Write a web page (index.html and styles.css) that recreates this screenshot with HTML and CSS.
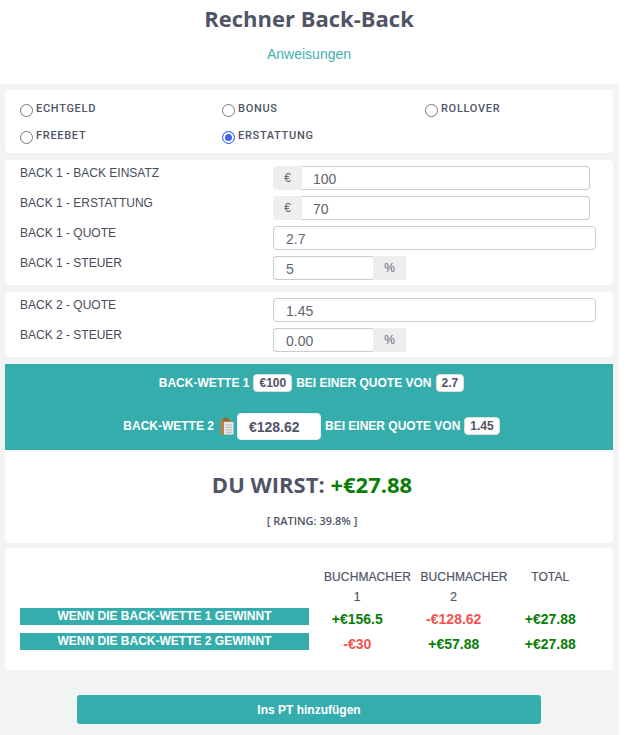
FILE: index.html
```html
<!DOCTYPE html>
<html lang="de">
<head>
<meta charset="utf-8">
<title>Rechner Back-Back</title>
<link rel="stylesheet" href="styles.css">
</head>
<body>
<div class="page">
  <header class="head">
    <h1 class="title">Rechner Back-Back</h1>
    <a class="link" href="#">Anweisungen</a>
  </header>
  <main class="main">
    <section class="card modes">
      <label class="mode"><span class="radio"></span><span class="mode-text">ECHTGELD</span></label>
      <label class="mode"><span class="radio"></span><span class="mode-text">BONUS</span></label>
      <label class="mode"><span class="radio"></span><span class="mode-text">ROLLOVER</span></label>
      <label class="mode"><span class="radio"></span><span class="mode-text">FREEBET</span></label>
      <label class="mode"><span class="radio checked"></span><span class="mode-text">ERSTATTUNG</span></label>
    </section>

    <section class="card fields">
      <div class="label">BACK 1 - BACK EINSATZ</div>
      <div class="group money"><span class="addon">€</span><span class="input joined-left indent">100</span></div>
      <div class="label">BACK 1 - ERSTATTUNG</div>
      <div class="group money"><span class="addon">€</span><span class="input joined-left indent">70</span></div>
      <div class="label">BACK 1 - QUOTE</div>
      <div class="group"><span class="input">2.7</span></div>
      <div class="label">BACK 1 - STEUER</div>
      <div class="group pct"><span class="input joined-right">5</span><span class="addon addon-pct">%</span></div>
    </section>

    <section class="card fields">
      <div class="label">BACK 2 - QUOTE</div>
      <div class="group"><span class="input">1.45</span></div>
      <div class="label">BACK 2 - STEUER</div>
      <div class="group pct"><span class="input joined-right">0.00</span><span class="addon addon-pct">%</span></div>
    </section>

    <section class="result">
      <div class="bets">
        <div class="bet bet-one">BACK-WETTE 1 <span class="chip">€100</span> BEI EINER QUOTE VON <span class="chip">2.7</span></div>
        <div class="bet bet-two">BACK-WETTE 2
          <svg class="clip" width="14" height="17" viewBox="0 0 14 17" aria-hidden="true">
            <rect x="0.5" y="1.5" width="11" height="15" rx="1" fill="#b5824a"/>
            <rect x="3" y="0" width="6" height="3" rx="1" fill="#8f6a3c"/>
            <rect x="4" y="4" width="9.5" height="12.5" fill="#e6e8e8"/>
            <path d="M5.5 7h6.5M5.5 9.5h6.5M5.5 12h6.5M5.5 14.3h6.5" stroke="#b4b9ba" stroke-width="1"/>
          </svg>
          <span class="chip chip-big">€128.62</span> BEI EINER QUOTE VON <span class="chip">1.45</span></div>
      </div>
      <div class="profit">
        <h2 class="profit-line">DU WIRST: <span class="pos">+€27.88</span></h2>
        <p class="rating">[ RATING: 39.8% ]</p>
      </div>
    </section>

    <section class="card table">
      <div class="th first">BUCHMACHER 1</div>
      <div class="th">BUCHMACHER 2</div>
      <div class="th">TOTAL</div>

      <div class="rowlabel">WENN DIE BACK-WETTE 1 GEWINNT</div>
      <div class="val pos">+€156.5</div>
      <div class="val neg">-€128.62</div>
      <div class="val pos">+€27.88</div>

      <div class="rowlabel">WENN DIE BACK-WETTE 2 GEWINNT</div>
      <div class="val neg">-€30</div>
      <div class="val pos">+€57.88</div>
      <div class="val pos">+€27.88</div>
    </section>

    <div class="actions"><button class="btn" type="button">Ins PT hinzufügen</button></div>
  </main>
</div>
</body>
</html>
```

FILE: styles.css
```css
* { box-sizing: border-box; }
html, body { margin: 0; padding: 0; background: #fff; overflow: hidden; height: 735px; }
body { font-family: "Liberation Sans", Arial, sans-serif; color: #4f5467; }
.page { width: 619px; }

.head { height: 84px; text-align: center; padding-top: 3px; padding-right: 1px; }
.title { margin: 0; font-family: "Open Sans", sans-serif; font-weight: 700; font-size: 22px; line-height: 30px; color: #4f5467; }
.link { display: block; margin-top: 12px; font-size: 14px; line-height: 18px; color: #3fb0ae; text-decoration: none; }

.main { background: #f2f4f4; padding: 6px 6px 11px 5px; height: 651px; }
.card { background: #fff; border-radius: 4px; box-shadow: 0 0 1px rgba(0,0,0,.06); }

.modes { height: 63px; padding: 11px 15px 0; display: grid; grid-template-columns: 202px 203px 1fr; grid-auto-rows: 27px; margin-bottom: 7px; }
.mode { display: flex; align-items: flex-start; font-family: Roboto, sans-serif; font-weight: 500; font-size: 11px; letter-spacing: .7px; line-height: 13px; color: #4f5467; }
.radio { width: 13px; height: 13px; margin: 3px 3px 0 0; border: 1px solid #767676; border-radius: 50%; background: #fff; flex: none; }
.radio.checked { border: 1px solid #3f66f5; background: #3f66f5; box-shadow: inset 0 0 0 2px #fff; }
.mode-text { display: block; margin-top: 1px; }

.fields { padding: 6px 17px 5px 15px; display: grid; grid-template-columns: 253px 1fr; grid-auto-rows: 24px; row-gap: 6px; margin-bottom: 7px; }
.label { font-size: 12px; line-height: 14px; color: #474b5a; }
.group { display: flex; height: 24px; }
.group.money { width: 317px; }
.group.pct { width: 133px; }
.input { flex: 1; height: 24px; padding: 0 12px; border: 1px solid #ccc; border-radius: 4px; background: #fff; font-size: 14px; line-height: 24px; color: #5f6472; }
.indent { padding-left: 11px; }
.joined-left { border-top-left-radius: 0; border-bottom-left-radius: 0; border-left: 0; }
.joined-right { border-top-right-radius: 0; border-bottom-right-radius: 0; border-right: 0; flex: none; width: 100px; }
.addon { width: 29px; flex: none; background: #eee; border-radius: 4px 0 0 4px; text-align: center; font-size: 12px; line-height: 25px; color: #5f6472; }
.addon-pct { width: 33px; border-radius: 0; }

.result { width: 608px; background: #fff; height: 179px; box-shadow: 0 0 1px rgba(0,0,0,.06); border-radius: 0 0 4px 4px; margin-bottom: 5px; }
.bets { height: 86px; background: #36adad; color: #fff; font-weight: 700; font-size: 12px; padding: 8px 0 0 5px; }
.bet { display: flex; justify-content: center; align-items: center; gap: 4px; }
.bet-one { height: 22px; }
.bet-two { height: 32px; margin-top: 16px; }
.chip { display: block; padding: 0 5px; height: 18px; line-height: 17px; background: #fff; border: 1px solid #ddd; border-radius: 4px; color: #4f5467; font-weight: 700; font-size: 12px; }
.chip-big { width: 84px; height: 27px; line-height: 26px; font-size: 14px; padding-left: 11px; border-color: #eee; }
.clip { margin: 0 -1px 0 2px; }

.profit { text-align: center; padding-left: 6px; }
.profit-line { margin: 0; padding-top: 18px; font-family: "Open Sans", sans-serif; font-weight: 700; font-size: 22px; line-height: 32px; color: #4f5467; }
.rating { margin: 14px 0 0; font-family: "Open Sans", sans-serif; font-size: 11px; font-weight: 600; line-height: 14px; color: #4f5467; }

.pos { color: #087d08; }
.neg { color: #ef5350; }

.table { height: 122px; padding: 19px 0 0 15px; display: grid; grid-template-columns: 289px 96.5px 96.5px 96.5px; grid-template-rows: 41px 25px 26px; margin-bottom: 25px; }
.th { padding: 0 15px; font-size: 12px; line-height: 20px; letter-spacing: .1px; text-align: center; font-weight: 400; color: #4f5467; -webkit-text-stroke: .2px #4f5467; }
.first { grid-column: 2; }
.rowlabel { height: 17px; background: #36adad; color: #fff; font-weight: 700; font-size: 12px; line-height: 17px; text-align: center; align-self: start; }
.val { font-weight: 700; font-size: 14px; line-height: 18px; text-align: center; margin-top: 2px; }

.actions { display: flex; justify-content: center; }
.btn { width: 464px; height: 29px; border: 0; border-radius: 3px; background: #36adad; color: #fff; font-family: "Liberation Sans", Arial, sans-serif; font-weight: 700; font-size: 12px; }
```
